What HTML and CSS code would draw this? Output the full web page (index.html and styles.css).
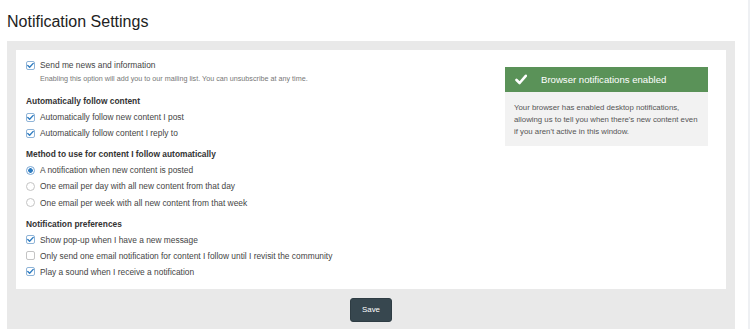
FILE: index.html
```html
<!DOCTYPE html>
<html lang="en">
<head>
  <meta charset="UTF-8">
  <title>Notification Settings</title>
  <link rel="stylesheet" href="styles.css">
</head>
<body>
  <h1 class="page-title">Notification Settings</h1>

  <form class="settings" action="/notifications" method="POST">
    <div class="card">
      <div class="options">
        <label class="opt"><input type="checkbox" name="news" checked> Send me news and information</label>
        <p class="hint">Enabling this option will add you to our mailing list. You can unsubscribe at any time.</p>

        <h2 class="group-title">Automatically follow content</h2>
        <label class="opt"><input type="checkbox" name="followPost" checked> Automatically follow new content I post</label>
        <label class="opt"><input type="checkbox" name="followReply" checked> Automatically follow content I reply to</label>

        <h2 class="group-title">Method to use for content I follow automatically</h2>
        <label class="opt"><input type="radio" name="method" value="notify" checked> A notification when new content is posted</label>
        <label class="opt"><input type="radio" name="method" value="daily"> One email per day with all new content from that day</label>
        <label class="opt"><input type="radio" name="method" value="weekly"> One email per week with all new content from that week</label>

        <h2 class="group-title">Notification preferences</h2>
        <label class="opt"><input type="checkbox" name="popup" checked> Show pop-up when I have a new message</label>
        <label class="opt"><input type="checkbox" name="oneEmail"> Only send one email notification for content I follow until I revisit the community</label>
        <label class="opt"><input type="checkbox" name="sound" checked> Play a sound when I receive a notification</label>
      </div>

      <aside class="notice">
        <div class="notice-head">
          <svg class="notice-icon" width="12" height="11" viewBox="0 0 12 11">
            <path d="M1.5 6 L4.6 9 L10.8 1.8" fill="none" stroke="#fff" stroke-width="2.6" stroke-linecap="round" stroke-linejoin="round"/>
          </svg>
          Browser notifications enabled
        </div>
        <p class="notice-body">Your browser has enabled desktop notifications, allowing us to tell you when there's new content even if you aren't active in this window.</p>
      </aside>
    </div>

    <div class="actions">
      <button class="btn" type="submit">Save</button>
    </div>
  </form>
</body>
</html>
```

FILE: styles.css
```css
body {
  font-family: 'Liberation Sans', Arial, sans-serif;
  background: #fff;
  color: #444;
  margin: 0;
  padding: 12px 13px 0 7px;
  border-right: 2px solid #eef0f3;
  min-height: 100vh;
  box-sizing: border-box;
}

.page-title {
  font-size: 16px;
  font-weight: normal;
  line-height: 20px;
  color: #222;
  margin: 0 0 9px;
}

.settings {
  background: #e9e9e9;
  padding: 9px 9px 12px;
}

.card {
  display: flex;
  background: #fff;
  padding: 7px 18px 9px 10px;
}

.options {
  flex: 1;
}

.opt {
  display: flex;
  align-items: center;
  height: 16.1px;
  font-size: 8.4px;
  color: #444;
}

.opt input {
  appearance: none;
  -webkit-appearance: none;
  width: 9px;
  height: 9px;
  margin: 0 5px 0 0;
  border: 1px solid #c4c4c4;
  background: #fff;
  box-sizing: border-box;
  flex-shrink: 0;
}

.opt input[type="checkbox"] {
  border-radius: 2px;
}

.opt input[type="checkbox"]:checked {
  border-color: #8fb4d8;
  background: #fff url("data:image/svg+xml;utf8,<svg xmlns='http://www.w3.org/2000/svg' viewBox='0 0 9 9'><path d='M1.8 4.6 L3.6 6.3 L7.2 2.4' fill='none' stroke='%232f7cc0' stroke-width='1.4' stroke-linecap='round' stroke-linejoin='round'/></svg>") center / 9px 9px no-repeat;
}

.opt input[type="radio"] {
  border-radius: 50%;
}

.opt input[type="radio"]:checked {
  border-color: #7aa7d4;
  background: radial-gradient(circle, #2f7cc0 0, #2f7cc0 2px, #fff 2.6px);
}

.hint {
  font-size: 7.2px;
  line-height: 10px;
  color: #777;
  margin: 1px 0 9px 14px;
}

.group-title {
  font-size: 8.4px;
  font-weight: bold;
  line-height: 16px;
  color: #333;
  margin: 5px 0 0;
}

.notice {
  width: 203px;
  margin-top: 10px;
  align-self: flex-start;
}

.notice-head {
  display: flex;
  align-items: center;
  gap: 14px;
  height: 25px;
  padding-left: 10px;
  background: #5a9258;
  color: #fff;
  font-size: 9.6px;
}

.notice-icon {
  flex-shrink: 0;
}

.notice-body {
  margin: 0;
  padding: 10px 9px 8px;
  background: #f2f2f2;
  color: #555;
  font-size: 7.8px;
  line-height: 12px;
}

.actions {
  text-align: center;
  padding-top: 9px;
}

.btn {
  font-family: inherit;
  width: 42px;
  height: 24px;
  background: #37474f;
  color: #fff;
  border: 1px solid #2e3c43;
  border-radius: 3px;
  font-size: 7.9px;
  cursor: pointer;
}

.btn:hover {
  background: #2e3c43;
}
```
